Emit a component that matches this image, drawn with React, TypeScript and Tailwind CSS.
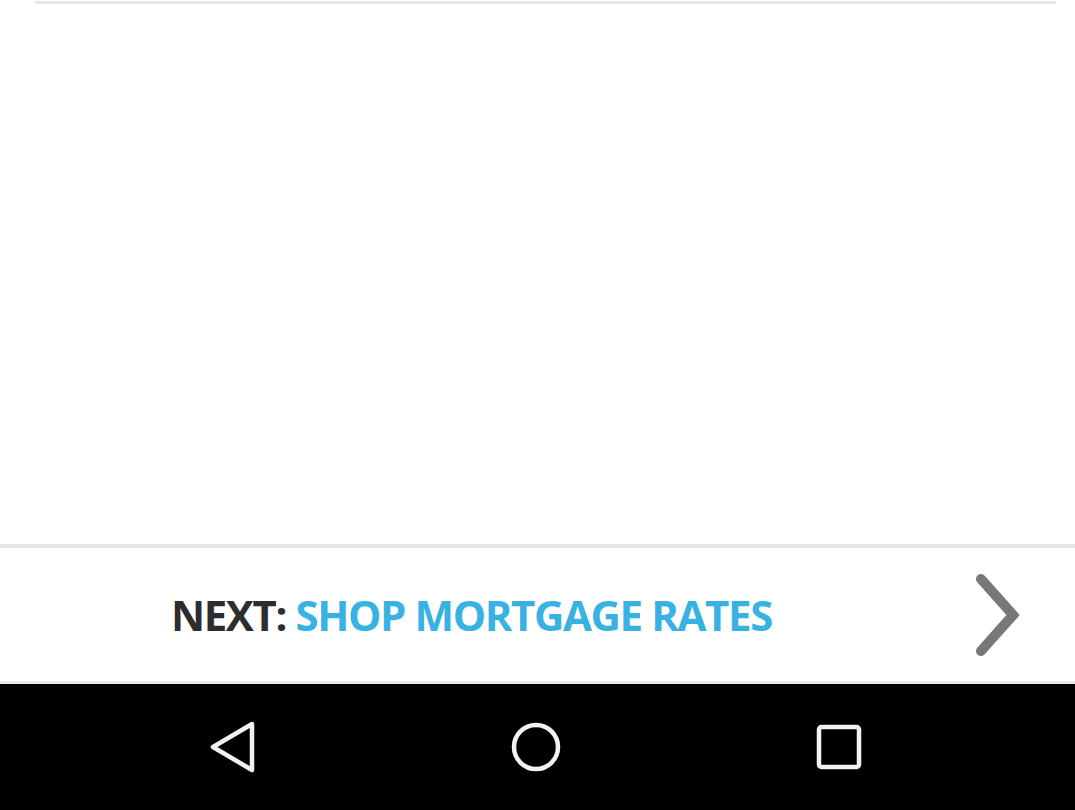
import React from "react";

export default function App() {
  return (
    <div className="flex h-[810px] w-[1075px] flex-col bg-white font-['Open_Sans',sans-serif]">
      {/* content area, empty */}
      <div className="flex-1 px-[35px] pt-[1px]">
        <div className="h-[3px] w-[1021px] bg-[#e6e6e6]" />
      </div>
      <div className="h-[4px] bg-[#e6e6e6]" />

      {/* next link */}
      <div className="flex h-[133px] items-center justify-between pl-[171px] pr-[52px]">
        <div className="text-[42px] font-bold leading-none tracking-[-1.4px]">
          <span className="text-[#2d2d2d]">NEXT: </span>
          <span className="text-[#38b2e3]">SHOP MORTGAGE RATES</span>
        </div>
        <svg width="50" height="84" viewBox="0 0 50 84">
          <path d="M8 6 L40 42 L8 78" fill="none" stroke="#787878" strokeWidth="10" strokeLinecap="round" />
        </svg>
      </div>
      <div className="h-[3px] bg-[#e8e8e8]" />

      {/* android nav bar */}
      <div className="flex h-[126px] items-center justify-between bg-black pl-[207px] pr-[212px]">
        <svg width="50" height="52" viewBox="0 0 50 52">
          <path d="M45 3 L6 26 L45 49 Z" fill="none" stroke="#f2f2f2" strokeWidth="4.5" strokeLinejoin="round" />
        </svg>
        <svg width="52" height="52" viewBox="0 0 52 52">
          <circle cx="26" cy="26" r="22" fill="none" stroke="#f2f2f2" strokeWidth="4.5" />
        </svg>
        <svg width="48" height="48" viewBox="0 0 48 48">
          <rect x="4" y="4" width="40" height="40" rx="2.5" fill="none" stroke="#f2f2f2" strokeWidth="4.5" />
        </svg>
      </div>
    </div>
  );
}
